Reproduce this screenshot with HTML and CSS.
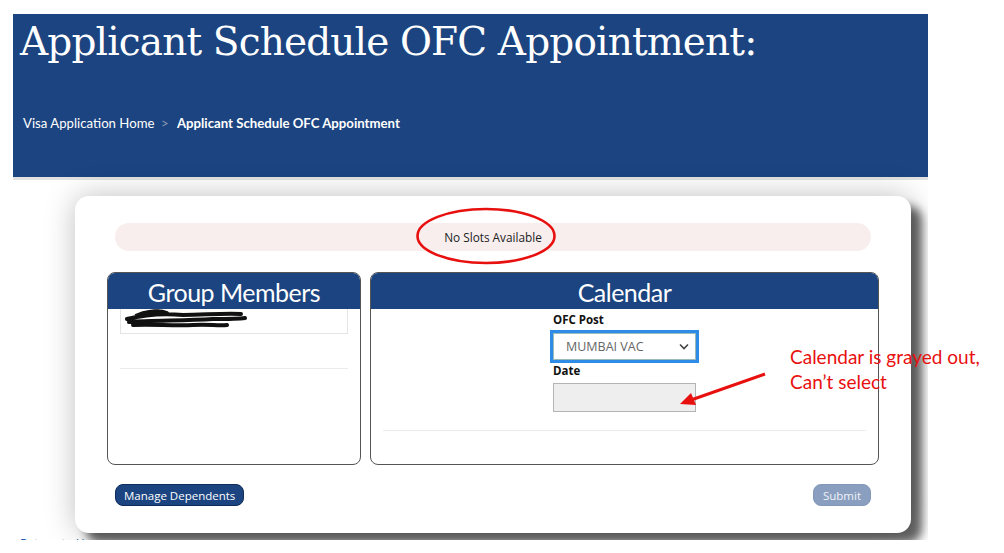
FILE: index.html
```html
<!DOCTYPE html>
<html lang="en">

<head>
    <meta charset="UTF-8">
    <meta name="viewport" content="width=device-width, initial-scale=1.0">
    <title>Applicant Schedule OFC Appointment</title>
    <link rel="stylesheet" href="styles.css">
</head>

<body>
    <div class="page">
        <div class="shot">
            <header class="banner">
                <h1>Applicant Schedule OFC Appointment:</h1>
                <nav class="crumbs">
                    <a href="#">Visa Application Home</a>
                    <span class="sep">&gt;</span>
                    <strong>Applicant Schedule OFC Appointment</strong>
                </nav>
            </header>

            <main class="card">
                <div class="alert">No Slots Available</div>

                <div class="panels">
                    <section class="panel group">
                        <h2 class="panel-head">Group Members</h2>
                        <div class="member">
                            <svg class="scribble" width="130" height="22" viewBox="0 0 130 22">
                                <path d="M4 10 C20 6 40 4 60 6 C80 6 100 4 118 5 M6 13 C30 11 60 12 90 10 C105 10 115 10 122 9 M10 16 C30 15 50 17 70 16 C85 15 95 17 104 16 M14 8 C24 2 36 1 44 4" fill="none" stroke="#111" stroke-width="4" stroke-linecap="round"/>
                                <path d="M12 6 C22 1 34 0 42 3" fill="none" stroke="#111" stroke-width="1.5"/>
                            </svg>
                        </div>
                        <div class="rule"></div>
                    </section>

                    <section class="panel calendar">
                        <h2 class="panel-head">Calendar</h2>
                        <div class="cal-form">
                            <label class="field-label">OFC Post</label>
                            <div class="select">
                                <span>MUMBAI VAC</span>
                                <svg width="10" height="7" viewBox="0 0 10 7">
                                    <path d="M1 1.5 L5 5.5 L9 1.5" fill="none" stroke="#444" stroke-width="1.6"/>
                                </svg>
                            </div>
                            <label class="field-label date-label">Date</label>
                            <div class="date-input"></div>
                        </div>
                        <div class="rule cal-rule"></div>
                    </section>
                </div>

                <div class="actions">
                    <button type="button" class="btn">Manage Dependents</button>
                    <button type="button" class="btn btn-disabled">Submit</button>
                </div>
            </main>

            <a href="#" class="return-link">Return to Home</a>
        </div>

        <!-- screenshot annotations -->
        <svg class="mark-ellipse" width="150" height="64" viewBox="0 0 150 64">
            <ellipse cx="70" cy="30" rx="68.5" ry="27" fill="none" stroke="#e8100f" stroke-width="2.6"/>
        </svg>
        <svg class="mark-arrow" width="100" height="44" viewBox="0 0 100 44">
            <line x1="86" y1="4" x2="12" y2="30" stroke="#e8100f" stroke-width="3"/>
            <polygon points="1,34 12,23 17,35" fill="#e8100f"/>
        </svg>
        <p class="note">Calendar is grayed out,<br>Can’t select</p>
    </div>
</body>

</html>
```

FILE: styles.css
```css
* {
    margin: 0;
    padding: 0;
    box-sizing: border-box;
}

body {
    font-family: "Open Sans", "Noto Sans", sans-serif;
    background: #fff;
    color: #222;
    overflow: hidden;
}

.page {
    position: relative;
    width: 1004px;
    height: 553px;
    padding: 14px 0 0 13px;
}

.shot {
    width: 915px;
    height: 526px;
    overflow: hidden;
}

/* Banner */
.banner {
    height: 166px;
    background: #1b4480;
    border-bottom: 3px solid #e2e2e2;
    color: #fff;
    padding: 2px 7px 0;
}

.banner h1 {
    font-family: "DejaVu Serif", serif;
    font-weight: normal;
    font-size: 39px;
    line-height: 52px;
    letter-spacing: -0.85px;
}

.crumbs {
    margin-top: 47px;
    font-family: Lato, sans-serif;
    font-size: 13.2px;
    line-height: 16px;
    padding-left: 3px;
}

.crumbs a {
    color: #fff;
    text-decoration: none;
}

.crumbs .sep {
    color: #8d9bb5;
    margin: 0 5px 0 3px;
}

.crumbs strong {
    font-weight: 700;
}

/* Card */
.card {
    margin: 16px 0 0 62px;
    width: 836px;
    height: 337px;
    padding: 27px 32px 0;
    background: #fff;
    border-radius: 14px;
    box-shadow: 0 0 30px rgba(0, 0, 0, 0.25), 11px 10px 10px rgba(0, 0, 0, 0.6);
}

.alert {
    margin: 0 8px;
    height: 28px;
    line-height: 28px;
    background: #f8eeee;
    border-radius: 14px;
    text-align: center;
    font-size: 11.8px;
    color: #222;
}

.panels {
    display: flex;
    gap: 9px;
    margin-top: 21px;
    height: 193px;
}

.panel {
    border: 1px solid #555;
    border-radius: 8px;
    overflow: hidden;
}

.group {
    width: 254px;
}

.calendar {
    flex: 1;
}

.panel-head {
    height: 36px;
    background: #1b4480;
    color: #fff;
    text-align: center;
    font-family: Lato, sans-serif;
    font-weight: normal;
    font-size: 25px;
    line-height: 38px;
    letter-spacing: -0.5px;
}

.member {
    margin: 0 12px;
    height: 25px;
    border: 1px solid #e4e4e4;
    border-top: none;
}

.scribble {
    display: block;
    margin: 0 0 0 2px;
}

.rule {
    margin: 34px 12px 0;
    border-top: 1px solid #ececec;
}

.cal-form {
    width: 143px;
    margin: 0 auto;
    padding-top: 3px;
}

.field-label {
    display: block;
    font-size: 11.5px;
    font-weight: 700;
    line-height: 16px;
    color: #111;
}

.select {
    margin-top: 5px;
    height: 27px;
    display: flex;
    align-items: center;
    justify-content: space-between;
    padding: 0 6px 0 12px;
    border: 1px solid #9bb;
    outline: 3px solid #2f8ce6;
    font-size: 12.5px;
    color: #666;
}

.date-label {
    margin-top: 3px;
}

.date-input {
    margin-top: 4px;
    height: 29px;
    background: #eeeeee;
    border: 1px solid #b4b4b4;
}

.cal-rule {
    margin-top: 18px;
}

.actions {
    display: flex;
    justify-content: space-between;
    margin: 19px 8px 0;
}

.btn {
    height: 22px;
    padding: 0 8px;
    border-radius: 8px;
    border: 1px solid #0e2c5c;
    background: #1b4480;
    color: #fff;
    font-family: "Open Sans", sans-serif;
    font-size: 11.5px;
    cursor: pointer;
}

.btn-disabled {
    width: 58px;
    background: #8a9fc0;
    border-color: #8398b9;
    color: #eef2f8;
}

.return-link {
    display: block;
    margin: 2px 0 0 7px;
    font-size: 12px;
    color: #1a5ea8;
    text-decoration: none;
}

/* Annotations */
.mark-ellipse {
    position: absolute;
    left: 416px;
    top: 206px;
}

.mark-arrow {
    position: absolute;
    left: 679px;
    top: 370px;
}

.note {
    position: absolute;
    left: 790px;
    top: 344px;
    font-family: Lato, sans-serif;
    font-size: 19px;
    line-height: 25px;
    color: #e8100f;
}
```
